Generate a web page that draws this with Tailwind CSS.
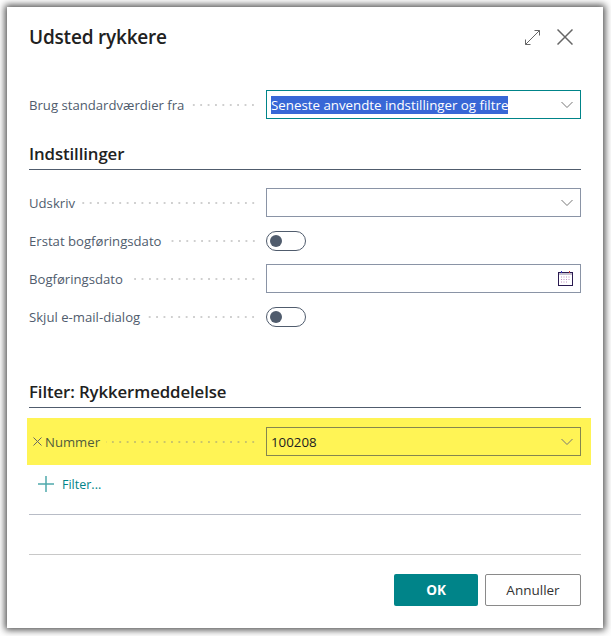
<!DOCTYPE html>
<html lang="en">
  <head>
    <meta charset="UTF-8" />
    <meta name="viewport" content="width=device-width, initial-scale=1.0" />
    <script src="https://cdn.jsdelivr.net/npm/@tailwindcss/browser@4"></script>
  </head>
  <body class="bg-white h-[636px] w-[611px] overflow-hidden pl-[7px] pt-[7px] font-['Open_Sans',sans-serif]">
    <div class="w-[596px] h-[621px] bg-white px-[22px] flex flex-col shadow-[0_0_7px_2px_rgba(0,0,0,0.7)]">
      <!-- Header -->
      <div class="h-[60px] flex items-center justify-between shrink-0">
        <h1 class="text-[19px] leading-[26px] font-semibold tracking-[-0.2px] text-[#212121]">Udsted rykkere</h1>
        <div class="flex items-center gap-[17px] pr-[8px]">
          <svg class="w-[15px] h-[15px] text-[#666]" viewBox="0 0 15 15" fill="none" stroke="currentColor" stroke-width="1">
            <path d="M.5 14.500 14.500 .5M9.500 .5H14.500V5.500M.5 9.500V14.500H5.500" />
          </svg>
          <svg class="w-[16px] h-[16px] text-[#666]" viewBox="0 0 16 16" fill="none" stroke="currentColor" stroke-width="1.5">
            <path d="M.5 .5 15.500 15.500M15.500 .5 .5 15.500" />
          </svg>
        </div>
      </div>

      <!-- Defaults row -->
      <div class="mt-[23px] flex items-center h-[29px] shrink-0">
        <span class="text-[13.15px] leading-[20px] pt-[1px] text-[#505c6d] whitespace-nowrap">Brug standardværdier fra</span>
        <span class="flex-1 ml-[6px] mr-[9px] h-[4px] bg-[radial-gradient(circle,#cfcfcf_1px,transparent_1.2px)] bg-[length:7.4px_4px] bg-right"></span>
        <div class="w-[315px] h-[29px] border border-[#008489] flex items-center justify-between pl-[4px] pr-[7px]">
          <span class="text-[13.3px] leading-[18px] bg-[#3867d6] text-white whitespace-nowrap">Seneste anvendte indstillinger og filtre</span>
          <svg class="w-[12px] h-[6px] text-[#777]" viewBox="0 0 12 6" fill="none" stroke="currentColor"><path d="M.5 0 6 5.500 11.500 0" /></svg>
        </div>
      </div>

      <!-- Indstillinger -->
      <div class="mt-[21px] h-[30px] border-b border-[#505c6d] shrink-0">
        <h2 class="text-[16.8px] leading-[28px] font-semibold tracking-[-0.1px] text-[#212121]">Indstillinger</h2>
      </div>

      <div class="mt-[18px] flex items-center h-[29px] shrink-0">
        <span class="text-[13.15px] leading-[20px] pt-[1px] text-[#505c6d] whitespace-nowrap">Udskriv</span>
        <span class="flex-1 ml-[6px] mr-[9px] h-[4px] bg-[radial-gradient(circle,#cfcfcf_1px,transparent_1.2px)] bg-[length:7.4px_4px] bg-right"></span>
        <div class="w-[315px] h-[29px] border border-[#8a94a6] flex items-center justify-end pr-[7px]">
          <svg class="w-[12px] h-[6px] text-[#777]" viewBox="0 0 12 6" fill="none" stroke="currentColor"><path d="M.5 0 6 5.500 11.500 0" /></svg>
        </div>
      </div>

      <div class="mt-[9px] flex items-center h-[29px] shrink-0">
        <span class="text-[13.15px] leading-[20px] pt-[1px] text-[#505c6d] whitespace-nowrap">Erstat bogføringsdato</span>
        <span class="flex-1 ml-[6px] mr-[9px] h-[4px] bg-[radial-gradient(circle,#cfcfcf_1px,transparent_1.2px)] bg-[length:7.4px_4px] bg-right"></span>
        <div class="w-[315px]">
          <div class="w-[40px] h-[20px] rounded-full border border-[#505c6d] flex items-center pl-[3px]">
            <span class="w-[12px] h-[12px] rounded-full bg-[#505c6d]"></span>
          </div>
        </div>
      </div>

      <div class="mt-[9px] flex items-center h-[29px] shrink-0">
        <span class="text-[13.15px] leading-[20px] pt-[1px] text-[#505c6d] whitespace-nowrap">Bogføringsdato</span>
        <span class="flex-1 ml-[6px] mr-[9px] h-[4px] bg-[radial-gradient(circle,#cfcfcf_1px,transparent_1.2px)] bg-[length:7.4px_4px] bg-right"></span>
        <div class="w-[315px] h-[29px] border border-[#8a94a6] flex items-center justify-end pr-[7px]">
          <svg class="w-[15px] h-[15px]" viewBox="0 0 15 15" fill="none">
            <rect x=".5" y="1.500" width="14" height="13" stroke="#2a1a50" />
            <rect x="1" y="2" width="13" height="2" fill="#c8c0d0" />
            <path d="M3.500 0v2" stroke="#3a3ac0" />
            <path d="M11.500 0v2" stroke="#c03a3a" />
            <path d="M3 6h1M5.500 6h1M8 6h1M10.500 6h1M3 8.500h1M5.500 8.500h1M8 8.500h1M10.500 8.500h1M3 11h1M5.500 11h1M8 11h1" stroke="#c090c0" />
          </svg>
        </div>
      </div>

      <div class="mt-[9px] flex items-center h-[29px] shrink-0">
        <span class="text-[13.15px] leading-[20px] pt-[1px] text-[#505c6d] whitespace-nowrap">Skjul e-mail-dialog</span>
        <span class="flex-1 ml-[6px] mr-[9px] h-[4px] bg-[radial-gradient(circle,#cfcfcf_1px,transparent_1.2px)] bg-[length:7.4px_4px] bg-right"></span>
        <div class="w-[315px]">
          <div class="w-[40px] h-[20px] rounded-full border border-[#505c6d] flex items-center pl-[3px]">
            <span class="w-[12px] h-[12px] rounded-full bg-[#505c6d]"></span>
          </div>
        </div>
      </div>

      <!-- Filter -->
      <div class="mt-[47px] h-[30px] border-b border-[#505c6d] shrink-0">
        <h2 class="text-[16.8px] leading-[28px] font-semibold tracking-[-0.1px] text-[#212121]">Filter: Rykkermeddelelse</h2>
      </div>

      <div class="mt-[10px] -ml-[2px] -mr-[10px] pr-[10px] pl-[6px] h-[47px] bg-[#fff455] flex items-center shrink-0">
        <svg class="w-[9px] h-[9px] text-[#666]" viewBox="0 0 9 9" fill="none" stroke="currentColor"><path d="M.5 .5 8.500 8.500M8.500 .5 .5 8.500" /></svg>
        <span class="ml-[3px] text-[13.15px] leading-[20px] text-[#505c3d] whitespace-nowrap">Nummer</span>
        <span class="flex-1 ml-[6px] mr-[9px] h-[4px] bg-[radial-gradient(circle,#c9c46a_1px,transparent_1.2px)] bg-[length:7.4px_4px] bg-right"></span>
        <div class="w-[315px] h-[29px] border border-[#85854f] flex items-center justify-between pl-[4px] pr-[7px]">
          <span class="text-[13.3px] leading-[20px] text-[#212121]">100208</span>
          <svg class="w-[12px] h-[6px] text-[#777]" viewBox="0 0 12 6" fill="none" stroke="currentColor"><path d="M.5 0 6 5.500 11.500 0" /></svg>
        </div>
      </div>

      <div class="mt-[10px] h-[18px] pl-[9px] flex items-center gap-[8px] shrink-0">
        <svg class="w-[16px] h-[16px] text-[#4fa9ac]" viewBox="0 0 16 16" fill="none" stroke="currentColor" stroke-width="1.5"><path d="M8 0V16M0 8H16" /></svg>
        <span class="text-[12.5px] leading-[18px] pt-[1px] text-[#008489]">Filter...</span>
      </div>

      <div class="mt-[21px] border-b border-[#b8bcc6] shrink-0"></div>
      <div class="mt-[39px] border-b border-[#c8c8c8] shrink-0"></div>

      <!-- Footer -->
      <div class="mt-[19px] flex justify-end gap-[7px] shrink-0">
        <button class="w-[84px] h-[32px] rounded-[2px] bg-[#008489] text-white text-[13.5px] font-bold">OK</button>
        <button class="w-[96px] h-[32px] rounded-[2px] border border-[#8a8a8a] bg-white text-[#333] text-[13.5px]">Annuller</button>
      </div>
    </div>
  </body>
</html>
